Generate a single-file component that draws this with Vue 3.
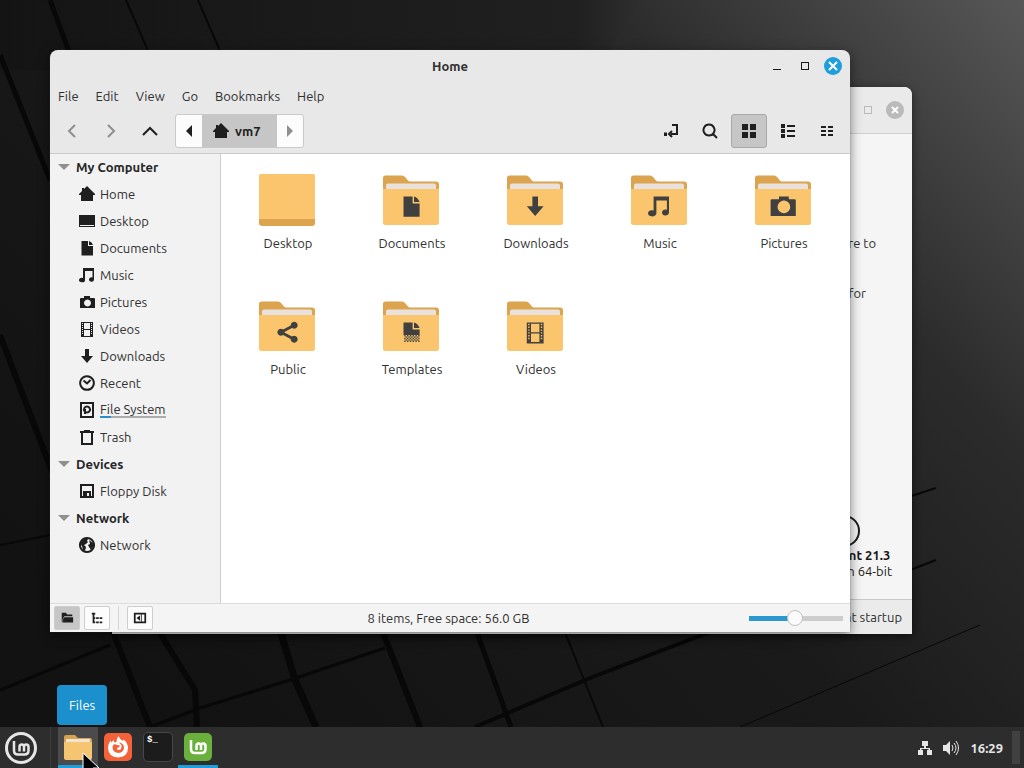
<template>
  <main class="desktop">
    <svg class="wallpaper" viewBox="0 0 1024 768" preserveAspectRatio="xMidYMid slice" aria-hidden="true">
      <defs>
        <linearGradient id="base" x1="0" y1="0.7" x2="1" y2="0">
          <stop offset="0" stop-color="#121212" />
          <stop offset="0.45" stop-color="#1a1a1a" />
          <stop offset="0.72" stop-color="#2b2b2b" />
          <stop offset="1" stop-color="#575757" />
        </linearGradient>
        <linearGradient id="shade" x1="0" y1="0" x2="1" y2="0">
          <stop offset="0" stop-color="#141414" />
          <stop offset="0.9" stop-color="#202020" />
          <stop offset="1" stop-color="#2e2e2e" />
        </linearGradient>
      </defs>
      <rect width="1024" height="768" fill="url(#base)" />
      <path d="M0 0H640L600 70H0z" fill="url(#shade)" />
      <g stroke="#080808" fill="none">
        <path
          v-for="line in wallpaperLines"
          :key="line.d"
          :d="line.d"
          :stroke-width="line.width"
        />
      </g>
    </svg>

    <!-- Welcome window, behind the file manager -->
    <section class="window welcome" aria-label="Welcome">
      <header class="welcome-bar">
        <span class="square"></span>
        <button class="close" aria-label="Close welcome window">
          <svg viewBox="0 0 18 18"><path d="M6 6l6 6M12 6l-6 6" /></svg>
        </button>
      </header>
      <div class="welcome-body">
        <p class="first">are to</p>
        <p class="second">for</p>
        <div class="release">
          <svg class="ring" viewBox="0 0 32 32">
            <circle cx="16" cy="16" r="15" fill="none" stroke="currentColor" stroke-width="2" />
          </svg>
          <strong>Linux Mint 21.3</strong>
          <span>Cinnamon 64-bit</span>
        </div>
      </div>
      <footer class="welcome-foot">Show this dialog at startup</footer>
    </section>

    <!-- File manager -->
    <section class="window files" aria-label="Home">
      <header class="titlebar">
        <span></span>
        <h1>Home</h1>
        <div class="window-buttons">
          <button aria-label="Minimize"><span class="dash"></span></button>
          <button aria-label="Maximize"><span class="square"></span></button>
          <button class="close active" aria-label="Close">
            <svg viewBox="0 0 18 18"><path d="M5 5l8 8M13 5l-8 8" /></svg>
          </button>
        </div>
      </header>

      <nav class="menubar">
        <button v-for="menu in menus" :key="menu">{{ menu }}</button>
      </nav>

      <div class="toolbar">
        <button class="tool" disabled aria-label="Back">
          <svg viewBox="0 0 16 16"><path d="M11 2L5 8l6 6" class="line" /></svg>
        </button>
        <button class="tool" disabled aria-label="Forward">
          <svg viewBox="0 0 16 16"><path d="M5 2l6 6-6 6" class="line" /></svg>
        </button>
        <button class="tool" aria-label="Up">
          <svg viewBox="0 0 16 16"><path d="M1 12l7-7 7 7" class="line" /></svg>
        </button>
        <div class="pathbar">
          <button class="path-arrow" aria-label="Scroll left">
            <svg viewBox="0 0 16 16"><path d="M11 2v12L5 8z" /></svg>
          </button>
          <button class="path-current">
            <svg viewBox="0 0 16 16"><path :d="icons.home.fill" /></svg>
            vm7
          </button>
          <button class="path-arrow faded" aria-label="Scroll right">
            <svg viewBox="0 0 16 16"><path d="M5 2v12l6-6z" /></svg>
          </button>
        </div>
        <span class="spacer"></span>
        <button
          v-for="tool in tools"
          :key="tool.icon"
          :class="['tool', { pressed: tool.icon === view }]"
          :aria-label="tool.label"
          @click="selectTool(tool)"
        >
          <svg viewBox="0 0 16 16">
            <path v-if="icons[tool.icon].fill" :d="icons[tool.icon].fill" fill-rule="evenodd" />
            <path v-if="icons[tool.icon].line" :d="icons[tool.icon].line" class="line" />
          </svg>
        </button>
      </div>

      <div class="content">
        <aside class="sidebar">
          <template v-for="group in places" :key="group.title">
            <button class="group" @click="group.open = !group.open">
              <svg viewBox="0 0 12 6"><path d="M0 0h12L6 6z" /></svg>
              {{ group.title }}
            </button>
            <ul v-if="group.open">
              <li v-for="place in group.items" :key="place.label">
                <a href="#" @click.prevent>
                  <svg viewBox="0 0 16 16">
                    <path v-if="icons[place.icon].fill" :d="icons[place.icon].fill" fill-rule="evenodd" />
                    <path v-if="icons[place.icon].line" :d="icons[place.icon].line" class="line" />
                  </svg>
                  <span :class="{ usage: place.usage }">{{ place.label }}</span>
                </a>
              </li>
            </ul>
          </template>
        </aside>

        <div class="grid">
          <button v-for="folder in folders" :key="folder.label" class="folder">
            <svg v-if="folder.label === 'Desktop'" viewBox="0 0 64 64">
              <rect x="4" y="6" width="56" height="52" rx="3" fill="#dca44e" />
              <path d="M4 51V9q0-3 3-3h50q3 0 3 3v42z" fill="#fbc56d" />
            </svg>
            <svg v-else viewBox="0 0 64 64">
              <path d="M4 50V10q0-2.500 2.500-2.500H23q2 0 3.500 2l2 2.500q1 1.500 3 1.500H57q3 0 3 3V50z" fill="#dca44e" />
              <path d="M7 24v-6.500q0-2 2-2h46q2 0 2 2V24z" fill="#e9e1dc" />
              <path d="M4 20q0 1 1 1h54q1 0 1-1v34.500q0 2.500-2.500 2.500h-51Q4 57 4 54.500z" fill="#fbc56d" />
              <g class="emblem" transform="translate(21 27) scale(1.4)">
                <path v-if="icons[folder.icon].fill" :d="icons[folder.icon].fill" fill-rule="evenodd" />
                <path v-if="icons[folder.icon].line" :d="icons[folder.icon].line" class="line" />
              </g>
            </svg>
            <span>{{ folder.label }}</span>
          </button>
        </div>
      </div>

      <footer class="statusbar">
        <div class="status-buttons">
          <button class="pressed" aria-label="Show places">
            <svg viewBox="0 0 16 16"><path d="M2 2h5l1 2h6v2H5L3 9v4H2zM5 7h10v6H3.500V9z" /></svg>
          </button>
          <button aria-label="Show tree">
            <svg viewBox="0 0 16 16">
              <path d="M2 2h4v2H2zM7 7h3v2H7zM11 7h3v2h-3zM7 12h3v2H7zM11 12h3v2h-3zM3 4h2v10H3zM3 7h3v2H3zM3 12h3v2H3z" />
            </svg>
          </button>
          <span class="divider"></span>
          <button aria-label="Hide sidebar">
            <svg viewBox="0 0 16 16"><path d="M2 3h12v10H2z" class="line" /><path d="M8 5v6L4 8zM9 3h1v10H9z" /></svg>
          </button>
        </div>
        <span>{{ folders.length }} items, Free space: 56.0 GB</span>
        <input v-model="zoom" type="range" min="0" max="100" aria-label="Icon size" />
      </footer>
    </section>

    <!-- Panel -->
    <footer class="panel">
      <button class="start" aria-label="Menu">
        <svg viewBox="0 0 32 32">
          <g fill="none" stroke="currentColor">
            <circle cx="16" cy="16" r="14.500" stroke-width="3" />
            <path
              d="M9 9v9.500q0 4 4 4h6.500q4 0 4-4V15q0-2.500-2.250-2.500T19 15v4.500M19 15q0-2.500-2.250-2.500T14.500 15v4.500"
              stroke-width="2.500"
            />
          </g>
        </svg>
      </button>
      <div class="launchers">
        <button class="launcher hovered running" aria-label="Files">
          <span class="tooltip">Files</span>
          <svg viewBox="0 0 28 28">
            <path d="M0 4q0-2 2-2h9l3 3h12q2 0 2 2v12H0z" fill="#d9a24f" />
            <path d="M2 6h24v5H2z" fill="#efe5d3" />
            <path d="M0 9h28v16q0 2-2 2H2q-2 0-2-2z" fill="#f6c572" />
          </svg>
          <svg class="pointer" viewBox="0 0 18 24">
            <path d="M1 1v20l5-4 3 7h5l-3-8h6z" fill="#000" stroke="#fff" />
          </svg>
        </button>
        <button class="launcher" aria-label="Firefox">
          <svg viewBox="0 0 28 28">
            <rect width="28" height="28" rx="5" fill="#f4623a" />
            <path
              d="M14.500 3q1 3 4.500 5l.5-1.500q4.500 3.500 4.500 8.500 0 9-10 9.500Q4.500 24 4 15q0-4 2.500-7.500l1 2L9.500 7l1 2.500q1-.5 2-.5Q12.500 5.500 14.500 3z"
              fill="#fff"
            />
            <path
              d="M9 12q2-1.500 4 0l3 .5q-.5 2-3 2.500-.5 2 1.500 2 3 0 3-3.500 0-2-2.500-4 5 .5 5 5.500-.5 4.500-5.500 5-5.500-.5-6-5z"
              fill="#f4623a"
            />
          </svg>
        </button>
        <button class="launcher" aria-label="Terminal">
          <span class="terminal">$_</span>
        </button>
        <button class="launcher running" aria-label="Welcome Screen">
          <svg viewBox="0 0 28 28">
            <rect width="28" height="28" rx="5" fill="#69b03c" />
            <path
              d="M7 7v9q0 4 4 4h6.500q4 0 4-4v-3q0-2.500-2.250-2.500T17 13v4M17 13q0-2.500-2.250-2.500T12.500 13v4"
              fill="none"
              stroke="#fff"
              stroke-width="2.500"
            />
          </svg>
        </button>
      </div>
      <span class="spacer"></span>
      <button class="tray" aria-label="Network connection">
        <svg viewBox="0 0 16 16">
          <path d="M5 1h6v5H5zM1 10h5v5H1zM10 10h5v5h-5zM7 6h2v2h4v2h-1.500V9h-7v1H3V8h4z" />
        </svg>
      </button>
      <button class="tray" aria-label="Volume">
        <svg viewBox="0 0 16 16">
          <path d="M0 5h3l4-4v14l-4-4H0z" />
          <path d="M9 5q2 3 0 6M11 3q4 5 0 10M13 1q5 7 0 14" class="line" />
        </svg>
      </button>
      <time>16:29</time>
      <button class="show-desktop" aria-label="Show desktop"></button>
    </footer>
  </main>
</template>

<script setup>
import { ref } from "vue";

const menus = ["File", "Edit", "View", "Go", "Bookmarks", "Help"];

const view = ref("icons");
const zoom = ref(49);

// Symbolic icons on a 16px grid, filled and stroked parts
const icons = {
  home: { fill: "M8 0L5 3V2H3v3L0 8v1h2v6h12V9h2V8z" },
  desktop: { fill: "M0 2h16v12H0zM1 12v1h14v-1z" },
  document: { fill: "M2.500 1H9v5h5v9.500H2.500zM10 1q3 1 4 4h-4z" },
  music: {
    fill: "M4 1h11v11.500a2.500 2.200 0 1 1-1.500-2V4H6v9a3 2.200 0 1 1-2-2z",
  },
  camera: {
    fill: "M5 1h7v2h4q1 0 1 1v11H-1V4q0-1 1-1h5zM8.500 4a4.500 4.500 0 1 0 .01 0zM8.500 5a3.500 3.500 0 1 1-.01 0zM8.500 5a3.500 3.500 0 1 0 .01 0z",
  },
  pictures: {
    fill: "M5 2h6v2h4q1 0 1 1v9H1V5q0-1 1-1h3zM8.500 5.500a3.500 3.500 0 1 0 .01 0z",
  },
  video: {
    fill: "M2 1h12v15H2zM3 2v1h1V2zM3 4v1h1V4zM3 6v1h1V6zM3 8v1h1V8zM3 10v1h1v-1zM3 12v1h1v-1zM12 2v1h1V2zM12 4v1h1V4zM12 6v1h1V6zM12 8v1h1V8zM12 10v1h1v-1zM12 12v1h1v-1zM5 2v6h6V2zM5 9v6h6V9z",
  },
  download: { fill: "M6 1h4v7h4l-6 7-6-7h4z" },
  recent: { line: "M8 1.200a6.800 6.800 0 1 0 .01 0zM4.500 5.500L8 8.500 11.500 5" },
  drive: {
    line: "M2 1h12v14H2zM8 4.500a3 3 0 1 0 .01 0z",
    fill: "M5 7h2v5H5z",
  },
  trash: { line: "M1 3h14M5 2h6M3 3v12h10V3" },
  floppy: { line: "M2 2h12v12H2z", fill: "M4 8h8v6h-2v-4H8v4H4z" },
  globe: {
    line: "M8 1a7 7 0 1 0 .01 0z",
    fill: "M1 5l5-4 3 1-1 2 1 1-2 2-2 1 2 2-1 4-2-1-1-4-2-2zM10 3l4 3v4l-2 3-2-3-1-2 2-1z",
  },
  share: {
    fill: "M13 .5a2.500 2.500 0 1 1-.01 0zM3.500 5.500a2.500 2.500 0 1 1-.01 0zM13 10.500a2.500 2.500 0 1 1-.01 0z",
    line: "M13 3L3.500 8l9.500 5",
  },
  template: {
    fill: "M2.500 1H9v5h5v4H2.500zM10 1q3 1 4 4h-4zM3 10h1v1H3zM5 10h1v1H5zM7 10h1v1H7zM9 10h1v1H9zM11 10h1v1h-1zM13 10h1v1h-1zM4 11h1v1H4zM6 11h1v1H6zM8 11h1v1H8zM10 11h1v1h-1zM12 11h1v1h-1zM3 12h1v1H3zM5 12h1v1H5zM7 12h1v1H7zM9 12h1v1H9zM11 12h1v1h-1zM13 12h1v1h-1zM4 13h1v1H4zM6 13h1v1H6zM8 13h1v1H8zM10 13h1v1h-1zM12 13h1v1h-1zM3 14h1v1H3zM5 14h1v1H5zM7 14h1v1H7zM9 14h1v1H9zM11 14h1v1h-1zM13 14h1v1h-1z",
  },
  location: { line: "M9 2h5v9H8M9 8l-3 3 3 3", fill: "M1 9.500h3v3.500H1z" },
  search: { line: "M7 1.500a5.500 5.500 0 1 0 .01 0zM11 11l4 4" },
  icons: { fill: "M1 1h6v6H1zM9 1h6v6H9zM1 9h6v6H1zM9 9h6v6H9z" },
  list: {
    fill: "M1 1h4v4H1zM1 6h4v4H1zM1 11h4v4H1zM7 2h8v2H7zM7 7h8v2H7zM7 12h8v2H7z",
  },
  compact: {
    fill: "M2 3h5v2H2zM2 7h5v2H2zM2 11h5v2H2zM9 3h5v2H9zM9 7h5v2H9zM9 11h5v2H9z",
  },
};

const tools = [
  { icon: "location", label: "Toggle location entry" },
  { icon: "search", label: "Search" },
  { icon: "icons", label: "Icon view", isView: true },
  { icon: "list", label: "List view", isView: true },
  { icon: "compact", label: "Compact view", isView: true },
];

const selectTool = (tool) => {
  if (tool.isView) {
    view.value = tool.icon;
  }
};

const places = ref([
  {
    title: "My Computer",
    open: true,
    items: [
      { label: "Home", icon: "home" },
      { label: "Desktop", icon: "desktop" },
      { label: "Documents", icon: "document" },
      { label: "Music", icon: "music" },
      { label: "Pictures", icon: "pictures" },
      { label: "Videos", icon: "video" },
      { label: "Downloads", icon: "download" },
      { label: "Recent", icon: "recent" },
      { label: "File System", icon: "drive", usage: true },
      { label: "Trash", icon: "trash" },
    ],
  },
  {
    title: "Devices",
    open: true,
    items: [{ label: "Floppy Disk", icon: "floppy" }],
  },
  {
    title: "Network",
    open: true,
    items: [{ label: "Network", icon: "globe" }],
  },
]);

const folders = [
  { label: "Desktop" },
  { label: "Documents", icon: "document" },
  { label: "Downloads", icon: "download" },
  { label: "Music", icon: "music" },
  { label: "Pictures", icon: "camera" },
  { label: "Public", icon: "share" },
  { label: "Templates", icon: "template" },
  { label: "Videos", icon: "video" },
];

// Gaps between the wallpaper tiles
const wallpaperLines = [
  { d: "M50 0L72 60", width: 5 },
  { d: "M126 0L152 60", width: 2 },
  { d: "M198 0L224 60", width: 2 },
  { d: "M0 55L50 180", width: 5 },
  { d: "M0 335L120 650L150 727", width: 6 },
  { d: "M0 545L50 535", width: 2 },
  { d: "M0 690L110 645", width: 3 },
  { d: "M158 630L195 690L197 727", width: 6 },
  { d: "M280 630L295 680L316 727", width: 7 },
  { d: "M382 630L420 727", width: 6 },
  { d: "M476 630L511 727", width: 5 },
  { d: "M564 630L603 727", width: 2 },
  { d: "M150 727L200 708L290 680L385 648", width: 3 },
  { d: "M475 727L590 678L715 630", width: 4 },
  { d: "M740 727L980 625", width: 1 },
  { d: "M905 498L936 488", width: 2 },
  { d: "M905 572L936 560", width: 2 },
];
</script>

<style>
body {
  background: #161616;
}
</style>

<style scoped>
.desktop {
  position: relative;
  display: flex;
  flex-direction: column;
  justify-content: flex-end;
  height: 100vh;
  overflow: hidden;
  color: #303030;
  font: 13px/18px Ubuntu, "Noto Sans", sans-serif;
}

.wallpaper {
  position: absolute;
  width: 100%;
  height: 100%;
}

button {
  display: flex;
  align-items: center;
  justify-content: center;
  padding: 0;
  border: 0;
  background: none;
  color: inherit;
  font: inherit;
}

svg {
  width: 16px;
  height: 16px;
  flex: none;
  fill: currentColor;
}

.line {
  fill: none;
  stroke: currentColor;
  stroke-width: 2;
}

.spacer {
  flex: 1;
}

/* Windows */
.window {
  position: absolute;
  display: flex;
  flex-direction: column;
  border-radius: 8px 8px 0 0;
  overflow: hidden;
}

.files {
  top: 50px;
  right: 174px;
  bottom: 136px;
  left: 50px;
  background: #e8e8e8;
  box-shadow: 0 0 1px #555, 0 3px 12px rgba(0, 0, 0, 0.5);
}

.welcome {
  top: 87px;
  right: 112px;
  bottom: 134px;
  left: 112px;
  background: #f5f5f5;
  box-shadow: 0 2px 8px rgba(0, 0, 0, 0.5);
}

.close {
  width: 18px;
  height: 18px;
  border-radius: 50%;
  background: #bababa;
}

.close.active {
  background: #1f9ede;
}

.close svg {
  width: 18px;
  height: 18px;
  stroke: #fff;
  stroke-width: 2;
}

.square {
  width: 8px;
  height: 8px;
  box-sizing: border-box;
  border: 1px solid currentColor;
}

.dash {
  width: 8px;
  height: 1px;
  margin-top: 6px;
  background: currentColor;
}

/* Welcome window */
.welcome-bar {
  display: flex;
  align-items: center;
  justify-content: flex-end;
  gap: 14px;
  height: 46px;
  padding-right: 8px;
  border-bottom: 1px solid #cfcfcf;
  background: #eaeaea;
  color: #bababa;
}

.welcome-body {
  display: flex;
  flex: 1;
  flex-direction: column;
  align-items: flex-end;
}

.welcome-body p {
  margin: 0;
}

.welcome-body .first {
  padding: 100px 36px 32px 0;
}

.welcome-body .second {
  padding-right: 46px;
}

.release {
  display: flex;
  flex-direction: column;
  align-items: center;
  margin-top: auto;
  padding-right: 20px;
  padding-bottom: 20px;
  line-height: 16px;
  color: #1a1a1a;
}

.ring {
  width: 32px;
  height: 32px;
}

.welcome-foot {
  padding: 8px 10px;
  border-top: 1px solid #c8c8c8;
  background: #ebebeb;
  text-align: right;
}

/* File manager bars */
.titlebar {
  display: grid;
  grid-template-columns: 1fr auto 1fr;
  align-items: center;
  height: 32px;
  padding: 0 8px;
}

.titlebar h1 {
  margin: 0;
  font-size: 13px;
}

.window-buttons {
  display: flex;
  justify-content: flex-end;
  gap: 10px;
  color: #1a1a1a;
}

.window-buttons button {
  width: 18px;
  height: 18px;
}

.menubar {
  display: flex;
  gap: 17px;
  padding: 5px 8px;
}

.toolbar {
  display: flex;
  align-items: center;
  gap: 3px;
  padding: 4px 5px 5px 4px;
  border-bottom: 1px solid #c9c9c9;
  color: #1f1f1f;
}

.tool {
  width: 36px;
  height: 34px;
  box-sizing: border-box;
  border: 1px solid transparent;
  border-radius: 3px;
}

.tool:disabled {
  color: #8f8f8f;
}

.pressed {
  border-color: #a9a9a9;
  background: #c6c6c6;
}

.pathbar {
  display: flex;
  height: 34px;
  margin-left: 4px;
  box-sizing: border-box;
  border: 1px solid #c9c9c9;
  border-radius: 3px;
  background: #fcfcfc;
}

.path-arrow {
  width: 26px;
}

.faded {
  color: #8f8f8f;
}

.path-current {
  gap: 6px;
  padding: 0 16px 0 11px;
  background: #c6c6c6;
  font-weight: bold;
}

.content {
  display: flex;
  flex: 1;
  min-height: 0;
}

/* Sidebar */
.sidebar {
  width: 170px;
  border-right: 1px solid #cfcfcf;
  background: #f2f2f2;
}

.group {
  gap: 6px;
  height: 27px;
  padding: 0 0 2px 8px;
  color: #262626;
  font-weight: bold;
}

.group svg {
  width: 12px;
  height: 6px;
  fill: #8f8f8f;
}

.sidebar ul {
  margin: 0;
  padding: 0;
  list-style: none;
}

.sidebar a {
  display: flex;
  align-items: center;
  gap: 5px;
  height: 25px;
  padding: 0 0 2px 29px;
  color: inherit;
  text-decoration: none;
}

.sidebar a svg {
  width: 16px;
  height: 16px;
  color: #1f1f1f;
}

.sidebar a .line {
  stroke-width: 2;
}

.usage {
  border-bottom: 2px solid;
  border-image: linear-gradient(90deg, #2a8fc4 17%, #acacac 17%) 1;
  line-height: 14px;
}

/* Folder grid */
.grid {
  display: grid;
  flex: 1;
  grid-template-columns: repeat(auto-fill, 124px);
  grid-auto-rows: 126px;
  padding: 14px 0 0 4px;
  background: #fff;
}

.folder {
  flex-direction: column;
  justify-content: flex-start;
  gap: 2px;
}

.folder svg {
  width: 64px;
  height: 64px;
}

.folder span {
  padding-left: 2px;
}

.emblem {
  color: #404040;
}

/* Status bar */
.statusbar {
  display: grid;
  grid-template-columns: 1fr auto 1fr;
  align-items: center;
  padding: 2px 7px 2px 4px;
  border-top: 1px solid #dcdcdc;
  background: #f4f4f4;
}

.status-buttons {
  display: flex;
  align-items: center;
  gap: 4px;
}

.status-buttons button {
  width: 26px;
  height: 24px;
  box-sizing: border-box;
  border: 1px solid #cdcdcd;
  border-radius: 2px;
  background: #fcfcfc;
  color: #1f1f1f;
}

.status-buttons .pressed {
  background: #c6c6c6;
}

.status-buttons svg {
  width: 14px;
  height: 14px;
}

.divider {
  width: 1px;
  height: 24px;
  margin: 0 4px;
  background: #d6d6d6;
}

.statusbar input {
  justify-self: end;
  width: 94px;
  height: 18px;
  margin: 0;
  appearance: none;
  background: linear-gradient(90deg, #2b98cf 50%, #cdcdcd 50%) center / 100% 5px no-repeat;
}

.statusbar input::-webkit-slider-thumb {
  width: 16px;
  height: 16px;
  box-sizing: border-box;
  appearance: none;
  border: 1px solid #c0c0c0;
  border-radius: 50%;
  background: #fbfbfb;
}

/* Panel */
.panel {
  position: relative;
  display: flex;
  align-items: stretch;
  height: 41px;
  background: #2d2d2d;
  color: #e6e6e6;
}

.start {
  width: 42px;
  padding-right: 8px;
  border-right: 1px solid #3d3d3d;
  box-sizing: content-box;
}

.start svg {
  width: 32px;
  height: 32px;
}

.launchers {
  display: flex;
  padding-left: 7px;
}

.launcher {
  position: relative;
  width: 40px;
  padding-top: 1px;
  border-bottom: 3px solid transparent;
}

.launcher svg {
  width: 28px;
  height: 28px;
}

.hovered {
  background: #4b4b4b;
}

.running {
  border-color: #1f9ede;
}

.terminal {
  width: 30px;
  height: 30px;
  box-sizing: border-box;
  padding-left: 3px;
  border: 1px solid #484848;
  border-radius: 5px;
  background: #1c1c1c;
  color: #fff;
  font: bold 9px/14px "Liberation Mono", monospace;
  text-align: left;
}

.tooltip {
  position: absolute;
  bottom: 40px;
  left: -1px;
  padding: 11px 12px;
  border-radius: 4px;
  background: #1b90cd;
  color: #fff;
}

.launcher .pointer {
  position: absolute;
  top: 25px;
  left: 24px;
  z-index: 1;
  width: 18px;
  height: 24px;
}

.tray {
  width: 26px;
}

.tray .line {
  stroke-width: 1;
}

time {
  align-self: center;
  padding: 0 9px 0 6px;
  font-weight: bold;
}

.show-desktop {
  width: 8px;
  margin: 4px 4px 4px 0;
  background: #414141;
}
</style>
